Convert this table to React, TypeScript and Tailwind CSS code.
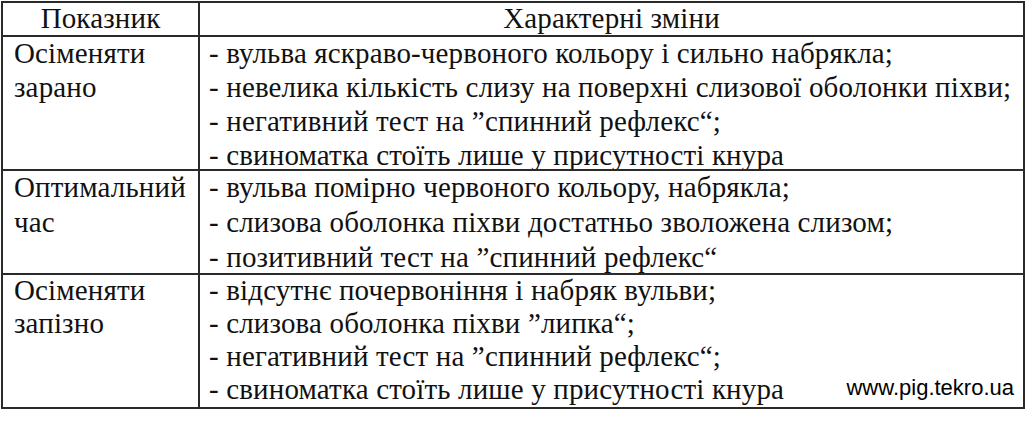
const rows = [
  {
    label: ["Осіменяти", "зарано"],
    h: "h-[134px] border-b-2 border-[#2a2a2a]",
    leading: "leading-[34px]",
    items: [
      "- вульва яскраво-червоного кольору і сильно набрякла;",
      "- невелика кількість слизу на поверхні слизової оболонки піхви;",
      "- негативний тест на ”спинний рефлекс“;",
      "- свиноматка стоїть лише у присутності кнура",
    ],
  },
  {
    label: ["Оптимальний", "час"],
    h: "h-[104px] border-b-2 border-[#2a2a2a]",
    leading: "leading-[35px]",
    items: [
      "- вульва помірно червоного кольору, набрякла;",
      "- слизова оболонка піхви достатньо зволожена слизом;",
      "- позитивний тест на ”спинний рефлекс“",
    ],
  },
  {
    label: ["Осіменяти", "запізно"],
    h: "h-[132px]",
    leading: "leading-[33px]",
    items: [
      "- відсутнє почервоніння і набряк вульви;",
      "- слизова оболонка піхви ”липка“;",
      "- негативний тест на ”спинний рефлекс“;",
      "- свиноматка стоїть лише у присутності кнура",
    ],
  },
];

export default function App() {
  return (
    <div className="min-h-screen bg-white pl-px pt-px">
      <div className="w-[1024px] border-2 border-[#2a2a2a] font-['Liberation_Serif'] text-[29px] tracking-[0.15px] text-[#111]">
        {/* Header */}
        <div className="grid h-[34px] grid-cols-[197px_1fr] border-b-2 border-[#2a2a2a] leading-[31px]">
          <div className="border-r-2 border-[#2a2a2a] text-center">Показник</div>
          <div className="text-center">Характерні зміни</div>
        </div>

        {rows.map((row, i) => (
          <div
            key={i}
            className={`grid grid-cols-[197px_1fr] overflow-hidden ${row.h} ${row.leading}`}
          >
            <div className="border-r-2 border-[#2a2a2a] pl-[11px]">
              <div className="-mt-px">
                {row.label.map((l) => (
                  <div key={l}>{l}</div>
                ))}
              </div>
            </div>
            <div className="relative pl-[9px]">
              <div className="-mt-px">
                {row.items.map((t, j) => (
                  <div key={j} className="whitespace-nowrap">
                    {t}
                  </div>
                ))}
              </div>
              {i === rows.length - 1 && (
                <span className="absolute bottom-[8px] right-[9px] font-['Liberation_Sans'] text-[22px] leading-none tracking-normal text-black">
                  www.pig.tekro.ua
                </span>
              )}
            </div>
          </div>
        ))}
      </div>
    </div>
  );
}
